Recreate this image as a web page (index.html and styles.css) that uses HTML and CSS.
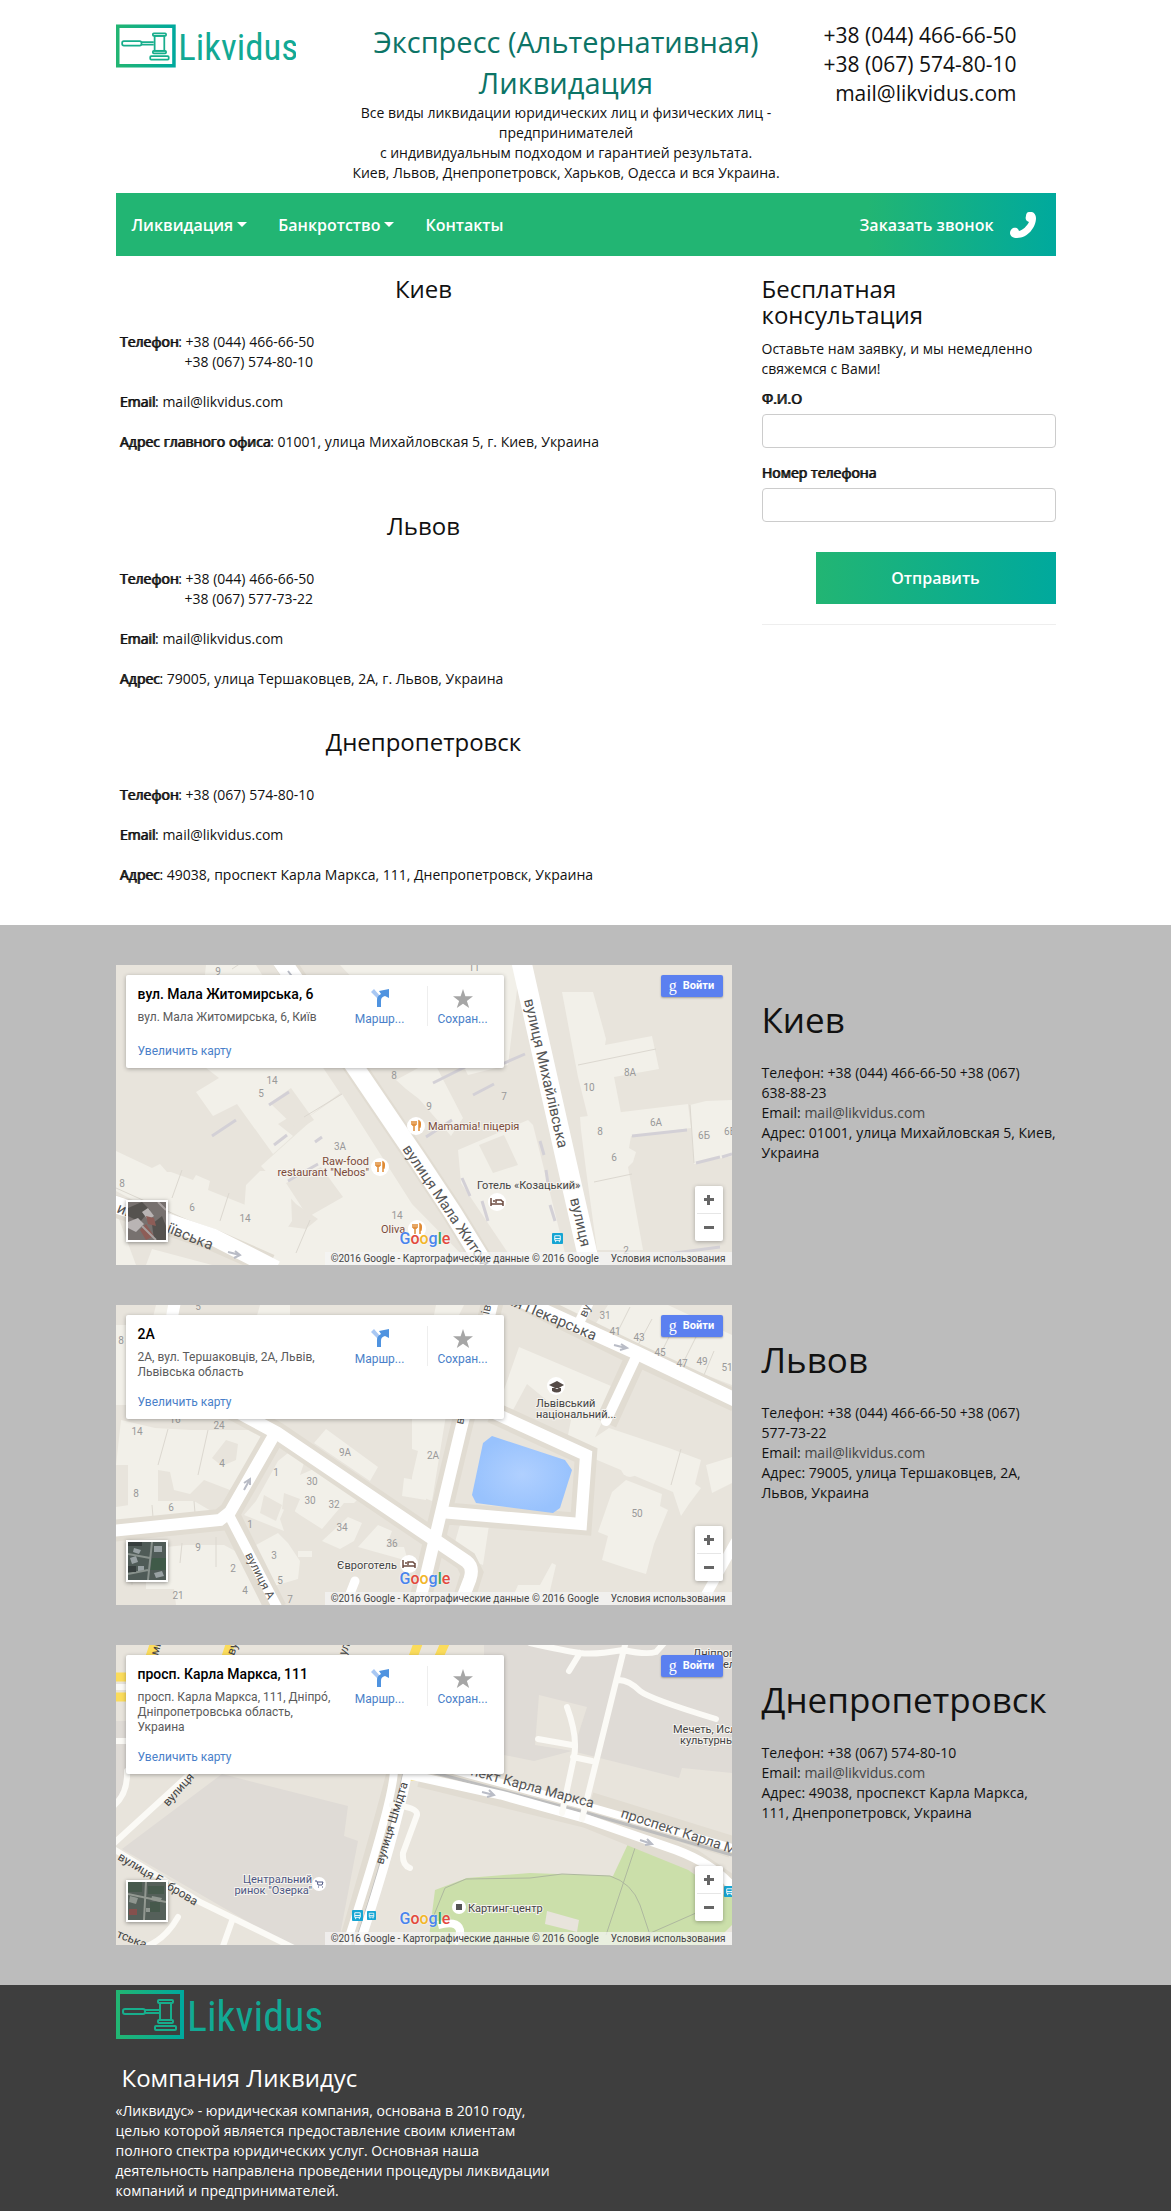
FILE: index.html
```html
<!DOCTYPE html>
<html lang="ru">
<head>
<meta charset="utf-8">
<meta name="viewport" content="width=device-width, initial-scale=1">
<title>Likvidus - Контакты</title>
<link rel="stylesheet" href="styles.css">
</head>
<body>
<svg class="sprite" aria-hidden="true">
  <defs>
    <linearGradient id="brand" x1="0" y1="0" x2="1" y2="0"><stop offset="0" stop-color="#22b573"/><stop offset="1" stop-color="#00a99d"/></linearGradient>
    <radialGradient id="water"><stop offset="0" stop-color="#b0d0ff"/><stop offset="1" stop-color="#98c2fd"/></radialGradient>
  </defs>
  <symbol id="logo" viewBox="0 0 205 49">
    <rect x="2" y="2" width="64" height="45" fill="none" stroke="url(#brand)" stroke-width="4"/>
    <g fill="none" stroke="#17ae8c" stroke-width="2">
      <rect x="7" y="19" width="22" height="5" rx="2"/>
      <path d="M29 20h14M29 23h14"/>
      <rect x="44" y="13" width="11" height="17"/>
      <rect x="42" y="10" width="15" height="3" rx="1"/>
      <rect x="42" y="30" width="15" height="3" rx="1"/>
      <rect x="39" y="36" width="21" height="4" rx="1"/>
    </g>
    <text x="71" y="41" class="logo-text">Likvidus</text>
  </symbol>
  <symbol id="route" viewBox="0 0 18 18">
    <path d="M0 3l3-3 6 7v5z" fill="#a9c8f3"/>
    <path d="M6 18v-7c0-3 1-4 4-6L8 2l10-2v9l-4-2c-3 1-4 2-4 5v6z" fill="#4f93e0"/>
  </symbol>
  <symbol id="star" viewBox="0 0 20 20"><path d="M10 0l2.4 7.300H20l-6.100 4.600L16.200 19 10 14.700 3.800 19l2.300-7.100L0 7.300h7.600z" fill="#a6a6a6"/></symbol>
  <symbol id="fork" viewBox="0 0 18 18">
    <circle cx="9" cy="9" r="9" fill="#fff"/>
    <path d="M5 4v4M7 4v4M9 4v4M5 8h4M7 8v6M12 14V4q2 1 1 6h-1" stroke="#e08a33" stroke-width="1.500" fill="none"/>
  </symbol>
  <symbol id="bed" viewBox="0 0 18 18">
    <circle cx="9" cy="9" r="9" fill="#fff"/>
    <path d="M3 5v8M15 8v5M3 11h12M8 10V7h5l2 2v2M5 8h2" stroke="#6d4c41" stroke-width="1.500" fill="none"/>
  </symbol>
  <symbol id="bus" viewBox="0 0 12 12">
    <rect width="12" height="12" rx="1" fill="#16a5d3"/>
    <path d="M3 3h6v5H3zM3 6h6M4 8v2M8 8v2" stroke="#fff" fill="none"/>
  </symbol>
</svg>

<div class="container">
  <header class="header">
    <a class="header-logo" href="#"><svg class="logo" role="img" aria-label="Likvidus"><use href="#logo"/></svg></a>
    <div class="slogan">
      <h1>Экспресс (Альтернативная) Ликвидация</h1>
      <p>Все виды ликвидации юридических лиц и физических лиц - предпринимателей<br>с индивидуальным подходом и гарантией результата.<br>Киев, Львов, Днепропетровск, Харьков, Одесса и вся Украина.</p>
    </div>
    <address class="header-contacts">+38 (044) 466-66-50<br>+38 (067) 574-80-10<br>mail@likvidus.com</address>
  </header>

  <nav class="nav">
    <button class="nav-item" type="button">Ликвидация<span class="caret"></span></button>
    <button class="nav-item" type="button">Банкротство<span class="caret"></span></button>
    <a class="nav-item" href="#">Контакты</a>
    <button class="nav-item nav-call" type="button">Заказать звонок
      <svg class="phone" viewBox="0 0 26 26" aria-hidden="true"><path d="M19 0c4-1 7 2 7 6 0 9-8 20-19 20-4 0-7-2-7-5 0-2 1-4 3-5 3-1 5 0 6 3 4-1 8-5 10-9-3-1-4-3-3-6 0-2 1-4 3-4z" fill="#fff"/></svg>
    </button>
  </nav>

  <div class="columns">
    <main>
      <section class="office office-main">
        <h2>Киев</h2>
        <p><b>Телефон</b>: +38 (044) 466-66-50<br><span class="second-phone">+38 (067) 574-80-10</span></p>
        <p><b>Email</b>: mail@likvidus.com</p>
        <p><b>Адрес главного офиса</b>: 01001, улица Михайловская 5, г. Киев, Украина</p>
      </section>
      <section class="office">
        <h2>Львов</h2>
        <p><b>Телефон</b>: +38 (044) 466-66-50<br><span class="second-phone">+38 (067) 577-73-22</span></p>
        <p><b>Email</b>: mail@likvidus.com</p>
        <p><b>Адрес</b>: 79005, улица Тершаковцев, 2А, г. Львов, Украина</p>
      </section>
      <section class="office">
        <h2>Днепропетровск</h2>
        <p><b>Телефон</b>: +38 (067) 574-80-10</p>
        <p><b>Email</b>: mail@likvidus.com</p>
        <p><b>Адрес</b>: 49038, проспект Карла Маркса, 111, Днепропетровск, Украина</p>
      </section>
    </main>
    <aside>
      <form class="consult">
        <h2>Бесплатная консультация</h2>
        <p>Оставьте нам заявку, и мы немедленно свяжемся с Вами!</p>
        <label for="name">Ф.И.О</label>
        <input id="name" type="text">
        <label for="phone">Номер телефона</label>
        <input id="phone" type="tel">
        <button type="button">Отправить</button>
      </form>
    </aside>
  </div>
</div>

<div class="maps">
  <div class="container">
    <section class="columns map-row">
      <div class="map">
        <svg class="map-art" viewBox="0 0 616 300" preserveAspectRatio="xMidYMid slice" aria-hidden="true">
          <g class="building">
            <path d="M90 0h50l25 40 59 88-36 27-8-7-18 11 15 12-20 18-36-50-24 12-17-24 23-14L80 95zM224 0h180l-12 100-40 10-30-60-60-10z"/>
            <path d="M188 155l38-26 70 110 60 61H180l-10-20 32-26-22-15-35-38 50-45zM130 220l14-14 30 0 2 50-20 30-30-12z"/>
            <path d="M0 186l36 17 8-4 7 8 4 0 22 8 3-5 14 6-2 9 45 18 8 15 45 6 61 28-7 14H150L0 226z"/>
            <path d="M280 115l37-20 30 58-12 18-32-37-13-10z"/>
            <path d="M342 185l70-30 5 5 35 140h-52l-55-82z"/>
            <path d="M446 27h31l10 36 3 11-1 6 47-9 7 33-45 8 7 36-33 4-10-40z"/>
            <path d="M464 152l42-5 66-8 3 24-60 8-2 12 7 4-3 10-5 5 15 83h-46l-11-80-5-40zM574 140l16-4 26-1v56l-38 8z"/>
            <path d="M0 246v54h20zM36 284l60 16H30z"/>
          </g>
          <g class="yard"><path d="M154 138l21-15 23 32-16 10zM363 180l25-10 14 30-25 8zM170 218l35-16 22 30-35 20z"/></g>
          <g class="wall"><path d="M96 171l24-16M153 140l20-13M158 180l13-10M172 216l30-17M199 177l7-5M317 118l36-18M357 130l21-11M384 100l25-11M310 172l26-17M516 171l55-6M580 198l24-6M606 192l10-3M424 176l4 14M430 205l2 14M434 240l5 16M372 290l12 8M346 213l8 18M366 236l6 20M544 290l60-8"/></g>
          <path class="edge" d="M188 152l38-23M0 223L138 285M56 233l10-28M104 256l9-28M180 288l14-33M462 100l78-16M478 217l38-8M574 140l4 58M116 4l12-8"/>
          <g class="margin"><path d="M167-5L241 105L302 195L337 248L372 305"/><path d="M-5 240L97 275L154 300"/></g>
          <g class="road"><path stroke-width="18" d="M165-5L241 105L302 195L337 248L372 305"/><path stroke-width="20" d="M405-5L450 195L475 305"/><path stroke-width="17" d="M-5 238L97 272L160 304"/></g>
          <path class="arrow" d="M172 6l6 8M172 14l7 0M112 287l12 3M119 286l5 4-6 3"/>
          <g class="num"><text x="102" y="10">9</text><text x="156" y="119">14</text><text x="145" y="132">5</text><text x="224" y="185">3А</text><text x="76" y="246">6</text><text x="129" y="257">14</text><text x="281" y="254">14</text><text x="6" y="222">8</text><text x="278" y="114">8</text><text x="388" y="135">7</text><text x="313" y="145">9</text><text x="473" y="126">10</text><text x="514" y="111">8А</text><text x="540" y="161">6А</text><text x="588" y="174">6Б</text><text x="614" y="170">6Б</text><text x="484" y="170">8</text><text x="498" y="196">6</text><text x="510" y="289">2</text><text x="358" y="6">11</text></g>
          <g class="street"><text transform="translate(408 35) rotate(77)">вулиця Михайлівська</text><text transform="translate(454 234) rotate(77)">вулиця</text><text transform="translate(286 184) rotate(56)">вулиця Мала Житом</text><text transform="translate(0 247) rotate(22)">иц</text><text transform="translate(50 267) rotate(22)">іївська</text></g>
          <g class="poi food"><text x="312" y="165">Mamamia! піцерія</text><text x="253" y="200" text-anchor="end">Raw-food</text><text x="253" y="211" text-anchor="end">restaurant "Nebos"</text><text x="265" y="268">Oliva</text></g>
          <text class="poi" x="361" y="224">Готель «Козацький»</text>
          <use href="#fork" x="291" y="152" width="18" height="18"/><use href="#fork" x="255" y="193" width="18" height="18"/><use href="#fork" x="292" y="255" width="18" height="18"/><use href="#bed" x="372" y="228" width="18" height="18"/><use href="#bus" x="436" y="268" width="11" height="11"/>
        </svg>
        <div class="card">
          <div class="card-text"><h3>вул. Мала Житомирська, 6</h3><p>вул. Мала Житомирська, 6, Київ</p><a href="#">Увеличить карту</a></div>
          <a class="card-action" href="#"><svg class="icon-route"><use href="#route"/></svg>Маршр...</a>
          <a class="card-action card-save" href="#"><svg class="icon-star"><use href="#star"/></svg>Сохран...</a>
        </div>
        <button class="signin" type="button"><span class="g">g</span>Войти</button>
        <svg class="thumb" viewBox="0 0 38 38" aria-label="Спутник"><rect width="38" height="38" fill="#77716f"/><path d="M0 6L14 0l8 8-10 12L0 14zM24 22l10-8 4 10v14H26z" fill="#55524f"/><path d="M0 20l10-4 6 6-8 8-8-4zM14 10l6-4 6 8-6 4z" fill="#b9b4b4"/><path d="M18 14l8 2 2 8-8-2zM12 28l6-6 8 12-8 4z" fill="#8d5d57"/><path d="M14 24l14 14M30 0l8 8" stroke="#a8a1a0" stroke-width="2"/></svg>
        <span class="google"><i class="b">G</i><i class="r">o</i><i class="y">o</i><i class="b">g</i><i class="gr">l</i><i class="r">e</i></span>
        <div class="zoom"><button type="button" aria-label="Приблизить"></button><button type="button" aria-label="Отдалить"></button></div>
        <div class="credits"><span>©2016 Google - Картографические данные © 2016 Google</span><a href="#">Условия использования</a></div>
      </div>
      <div class="branch">
        <h2>Киев</h2>
        <p>Телефон: +38 (044) 466-66-50 +38 (067) <span class="number">638-88-23</span><br>Email: <a href="#">mail@likvidus.com</a><br>Адрес: 01001, улица Михайловская 5, Киев, Украина</p>
      </div>
    </section>

    <section class="columns map-row">
      <div class="map">
        <svg class="map-art" viewBox="0 0 616 300" preserveAspectRatio="xMidYMid slice" aria-hidden="true">
          <g class="building">
            <path d="M0 20h20v80H0zM5 115l34 8 36 2 65 0 10 5-36 55-26-10-14 14-16-4-4-18-12-2v48H12V160H0zM40 196h38l24 14-6 6-96 8v-22z"/>
            <path d="M70 240h38l26 14 18 46H60l-2-16H30v-40zM128 210l12-14 22-40 10-8 16 10-4 12 18-8 44 28-8 8-10 0-22 26-22-14-14-10-6 14 4 12zM140 240l22-12 10 10 12 18-2 18-34 10zM262 220l14 6-6 16 18 0 4 14-50-14z"/>
            <path d="M210 124l52 38-8 14-56-38zM288 173l22 4v18l-24-4zM296 110h34l-14 86-20-8v-16l6-26-6-2zM206 236l26-24 14 6-8 18-14 8zM40 0h18l-10 40H30zM144 0h30v14h-34zM320 0h28l-6 12-24-2zM182 246h14v6h-14z"/>
            <path d="M403 42l92 39-8 34-14 30-22-10 4-20-44-36-14 26-14-6zM475 135l18-12 60 20 32 12-6 24 6 4-12 16-8 12-8-24-90-38zM510 175l36 14-2 12 8 4-14 34-8 30-20-6-24-8 6-24-10-4 14-40zM345 216l28 4-6 40-16-6-14-10z"/>
            <path d="M440 0h32l-6 18-30-6zM480 18l12-18h60l64 30v50l-90-34zM436 258l-12 22h-22l-6 14h36l8-34z"/><circle cx="514" cy="163" r="9"/>
            <path d="M590 160l26-8v26l-20 10z"/>
          </g>
          <path class="yard" d="M110 135l12 4-2 16-14 6-10-8zM148 190l18 10-6 16-16-8zM168 188l16 6-6 14-12-4z"/>
          <path class="edge" d="M92 125l-10 45M36 200l2 24M78 196l2 24M16 240v40M66 238l-2 20M100 232v30M500 30l14-28M522 40l14-26M544 50l14-28M566 60l14-28M588 70l10-24M555 180l10-36M42 160l10-36"/>
          <g class="margin"><path d="M-5 226L104 215L114 207L157 132M111 101L161 128L304 225L350 256L356 268L346 300M114 212L160 304M377-5L344 128L302 304M376 107L470 150L465 219L324 208M390-14L521 50L620 96M521 50L490 118"/></g>
          <g class="road"><path stroke-width="12" d="M-5 226L104 215L114 207L157 132"/><path stroke-width="13" d="M111 101L161 128L304 225L350 256Q358 262 354 274L344 300"/><path stroke-width="10" d="M114 212L162 304"/><path stroke-width="12" d="M377-5L344 128L302 304"/><path stroke-width="12" d="M376 107L470 150L465 219L324 207"/><path stroke-width="14" d="M380-16L521 48L622 96"/><path stroke-width="10" stroke-linecap="round" d="M521 50L490 116M474-5L462 20"/><path stroke-width="10" d="M620 236L590 290"/><path stroke-width="9" stroke-linecap="round" d="M239 276L228 304"/><path stroke-width="12" d="M59-4L56 12"/></g>
          <path d="M376 131L449 155L456 165L444 203L437 208L360 198L356 190L367 138Z" fill="url(#water)"/>
          <path class="arrow" d="M128 185l6-11M128 178l6-4v6M498 40l12 3M505 39l6 4-7 2"/>
          <g class="num"><text x="82" y="5">5</text><text x="5" y="39">8</text><text x="21" y="130">14</text><text x="59" y="118">16</text><text x="103" y="124">24</text><text x="106" y="162">4</text><text x="20" y="192">8</text><text x="55" y="206">6</text><text x="160" y="171">1</text><text x="196" y="180">30</text><text x="194" y="199">30</text><text x="218" y="203">32</text><text x="229" y="151">9А</text><text x="226" y="226">34</text><text x="276" y="242">36</text><text x="134" y="223">1</text><text x="82" y="246">9</text><text x="158" y="254">3</text><text x="117" y="267">2</text><text x="164" y="279">5</text><text x="129" y="289">4</text><text x="62" y="294">21</text><text x="174" y="298">7</text><text x="317" y="154">2А</text><text x="521" y="212">50</text><text x="489" y="14">31</text><text x="499" y="30">41</text><text x="523" y="36">43</text><text x="544" y="51">45</text><text x="566" y="62">47</text><text x="586" y="60">49</text><text x="611" y="66">51</text></g>
          <g class="street"><text transform="translate(394 0) rotate(23)">ія Пекарська</text><text class="street-side" transform="translate(129 250) rotate(63)">вулиця А</text><text class="street-side" transform="translate(347 120) rotate(-77)">в</text><text class="street-side" transform="translate(373 10) rotate(-77)">ів</text><text class="street-side" transform="translate(470 13) rotate(-65)">ву</text></g>
          <g class="poi"><text x="420" y="102">Львівський</text><text x="420" y="113">національний...</text><text x="221" y="264">Євроготель</text></g>
          <circle cx="440" cy="81" r="9" fill="#fff"/><path d="M433 80l8-4 7 4-7 4zM436 83v3q5 3 9 0v-3" fill="#554b47"/><use href="#bed" x="284" y="250" width="18" height="18"/>
        </svg>
        <div class="card">
          <div class="card-text"><h3>2А</h3><p>2А, вул. Тершаковців, 2А, Львів, Львівська область</p><a href="#">Увеличить карту</a></div>
          <a class="card-action" href="#"><svg class="icon-route"><use href="#route"/></svg>Маршр...</a>
          <a class="card-action card-save" href="#"><svg class="icon-star"><use href="#star"/></svg>Сохран...</a>
        </div>
        <button class="signin" type="button"><span class="g">g</span>Войти</button>
        <svg class="thumb" viewBox="0 0 38 38" aria-label="Спутник"><rect width="38" height="38" fill="#4f5b57"/><path d="M24 16h14v12H22z" fill="#3f5a48"/><path d="M26 4h8v6h-8zM2 16l6-2 2 6-6 2zM10 24h6v5h-6zM6 6l7 2-2 4-6-2zM26 31l8-2 2 5-8 2z" fill="#98a1a3"/><path d="M24 0l-4 38M0 12l22 4M0 32l20-4" stroke="#88918c" stroke-width="2"/><path d="M0 0h14v4H0zM0 24h8v6H0z" fill="#373f3e"/></svg>
        <span class="google"><i class="b">G</i><i class="r">o</i><i class="y">o</i><i class="b">g</i><i class="gr">l</i><i class="r">e</i></span>
        <div class="zoom"><button type="button" aria-label="Приблизить"></button><button type="button" aria-label="Отдалить"></button></div>
        <div class="credits"><span>©2016 Google - Картографические данные © 2016 Google</span><a href="#">Условия использования</a></div>
      </div>
      <div class="branch">
        <h2>Львов</h2>
        <p>Телефон: +38 (044) 466-66-50 +38 (067) <span class="number">577-73-22</span><br>Email: <a href="#">mail@likvidus.com</a><br>Адрес: 79005, улица Тершаковцев, 2А, Львов, Украина</p>
      </div>
    </section>

    <section class="columns map-row">
      <div class="map">
        <svg class="map-art" viewBox="0 0 616 300" preserveAspectRatio="xMidYMid slice" aria-hidden="true">
          <path class="block" d="M0 76h14v52l-14 30zM106 129l126 32-4 30 14 5-20 104h-50L6 204zM388 0h228v128l-50-5-3 10-107-27-38 10-50-10V0z"/>
          <path d="M423 50l48 12-14 44-38-6z" fill="#e8e4dc"/>
          <path d="M512 199L582 225L616 250V280L596 300H312L319 245L351 233L414 228L497 231Z" fill="#cbdfaa"/>
          <path d="M318 270L329 243L350 234L414 233L446 229L494 231Q516 238 524 260L536 296M520 200L490 290M530 290L580 268" fill="none" stroke="#aeb89f"/>
          <path d="M431 266l32 9-2 12-32-8z" fill="#e8e4dc"/>
          <g class="yellow"><path d="M0 32h12M0 52h12M38 0l-4 12M114 0l-4 12M303-4l-6 16M330-4l-8 18M288 131h16"/></g>
          <g class="margin"><path d="M282 126Q274 160 232 304M304 131L471 172L577 215L616 242M474 158L616 202"/></g>
          <path d="M288 128Q270 210 238 304M304 124L471 168L616 210" fill="none" stroke="#bdbdbd" stroke-width="3"/>
          <g class="road"><path stroke-width="8" d="M278 126Q276 160 229 304"/><path stroke-width="9" d="M292 126Q280 190 242 304"/><path stroke-width="9" d="M290 129L385 150L471 174L560 205Q600 220 620 246"/><path stroke-width="8" d="M300 115L474 162L620 204"/></g>
          <g class="road minor" stroke-width="6"><path d="M510-4L466 174M414-2Q450 6 464 8T507 5Q530 10 540 7L549-3M464 8L453 26M501 35Q512 34 524 46Q534 54 600 74M451 62Q462 92 458 112L446 168M422 94L456 100M457 112L476 116M-4 203L84 257L180 304M-4 200L77 126M117 273L106 304M276 160Q302 162 301 170L287 208Q286 220 294 223M11 126Q12 150-4 162M-2 96h14M62 272Q46 300 20 304M0 42h10"/></g>
          <path d="M322 280q24-6 22 10l-6 8" fill="none" stroke="#fff" stroke-width="8"/>
          <path class="arrow" d="M366 147l12 3M373 145l5 5-7 2M524 195l12 4M531 194l5 5-7 1"/>
          <g class="street street-dark"><text transform="translate(354 130) rotate(15)">пект Карла Маркса</text><text transform="translate(504 172) rotate(18)">проспект Карла Маркса</text></g>
          <g class="street street-small"><text transform="translate(52 162) rotate(-48)">вулиця</text><text transform="translate(1 214) rotate(31)">вулиця Боброва</text><text transform="translate(267 220) rotate(-73)">вулиця Шмідта</text><text transform="translate(0 292) rotate(22)">тська</text><text transform="translate(230 11) rotate(-70)">ул.</text><text transform="translate(42 11) rotate(-75)">ми</text><text transform="translate(118 11) rotate(-70)">ву</text></g>
          <g class="poi market"><text x="196" y="238" text-anchor="end">Центральний</text><text x="196" y="249" text-anchor="end">ринок "Озерка"</text></g>
          <g class="poi"><text x="352" y="267">Картинг-центр</text><text x="557" y="88">Мечеть, Исламский</text><text x="564" y="99">культурный</text><text x="577" y="12">Дніпропетр</text><text x="607" y="23">ел</text></g>
          <circle cx="203" cy="239" r="7" fill="#fff"/><path d="M199 236h2l1 4h4l1-3h-5M202 242h1M206 242h1" stroke="#4d5784" fill="none"/>
          <circle cx="343" cy="262" r="7" fill="#fff"/><path d="M340 259h6v6h-6z" fill="#555"/>
          <use href="#bus" x="236" y="265" width="11" height="11"/><use href="#bus" x="251" y="266" width="9" height="9"/><use href="#bus" x="608" y="241" width="11" height="11"/>
        </svg>
        <div class="card">
          <div class="card-text"><h3>просп. Карла Маркса, 111</h3><p>просп. Карла Маркса, 111, Дніпро́, Дніпропетровська область, Украина</p><a href="#">Увеличить карту</a></div>
          <a class="card-action" href="#"><svg class="icon-route"><use href="#route"/></svg>Маршр...</a>
          <a class="card-action card-save" href="#"><svg class="icon-star"><use href="#star"/></svg>Сохран...</a>
        </div>
        <button class="signin" type="button"><span class="g">g</span>Войти</button>
        <svg class="thumb" viewBox="0 0 38 38" aria-label="Спутник"><rect width="38" height="38" fill="#55605a"/><path d="M0 0h14v10H0zM20 4h16v8H20zM22 20h10v10H22z" fill="#46594c"/><path d="M2 14l8 2-2 6-7-2zM24 14l10 2-2 4-9-2zM18 26h4v4h-4z" fill="#8f9690"/><path d="M18 0l-2 38M0 12l38 8" stroke="#929891" stroke-width="2"/><path d="M1 27h8v6H1z" fill="#85504d"/></svg>
        <span class="google"><i class="b">G</i><i class="r">o</i><i class="y">o</i><i class="b">g</i><i class="gr">l</i><i class="r">e</i></span>
        <div class="zoom"><button type="button" aria-label="Приблизить"></button><button type="button" aria-label="Отдалить"></button></div>
        <div class="credits"><span>©2016 Google - Картографические данные © 2016 Google</span><a href="#">Условия использования</a></div>
      </div>
      <div class="branch">
        <h2>Днепропетровск</h2>
        <p>Телефон: +38 (067) 574-80-10<br>Email: <a href="#">mail@likvidus.com</a><br>Адрес: 49038, проспекст Карла Маркса, 111, Днепропетровск, Украина</p>
      </div>
    </section>
  </div>
</div>

<footer class="footer">
  <div class="container">
    <div class="about">
      <svg class="logo logo-footer" role="img" aria-label="Likvidus"><use href="#logo"/></svg>
      <h2>Компания Ликвидус</h2>
      <p>«Ликвидус» - юридическая компания, основана в 2010 году, целью которой является предоставление своим клиентам полного спектра юридических услуг. Основная наша деятельность направлена проведении процедуры ликвидации компаний и предпринимателей.</p>
    </div>
  </div>
</footer>
</body>
</html>
```

FILE: styles.css
```css
* { box-sizing: border-box; }

body {
  margin: 0;
  background: #fff;
  color: #111;
  font: 14px/20px "Open Sans", "Noto Sans", sans-serif;
}

h1, h2, h3, p { margin: 0; font-weight: 400; }
button, input { font: inherit; }
button { border: 0; background: none; padding: 0; cursor: pointer; }
a { text-decoration: none; }
.sprite { display: block; width: 0; height: 0; }

.container { max-width: 970px; margin: 0 auto; padding: 0 15px; }

/* Header */
.header {
  display: grid;
  grid-template-columns: 223fr 455fr 262fr;
  padding: 21px 0 10px;
}
.header-logo { padding-top: 3px; }
.logo { display: block; width: 180px; height: 44px; }
.logo-text {
  font: 42px "Liberation Sans Narrow", "Roboto Condensed", "DejaVu Sans Condensed", sans-serif;
  fill: #12a994;
}
.slogan { text-align: center; }
.slogan h1 { color: #0c7466; font-size: 29px; line-height: 41px; }
.header-contacts {
  padding-right: 39px;
  font-size: 21px;
  font-style: normal;
  line-height: 29px;
  text-align: right;
}

/* Navigation */
.nav {
  display: flex;
  align-items: center;
  gap: 31px;
  min-height: 63px;
  padding: 0 16px;
  background: linear-gradient(to right, #22b573 80%, #00a99d);
}
.nav-item {
  display: flex;
  align-items: center;
  color: #fff;
  font-size: 16px;
  font-weight: 600;
}
.caret {
  margin-left: 4px;
  border: 5px solid transparent;
  border-top-color: #fff;
  border-bottom: 0;
}
.nav-call { gap: 16px; margin-left: auto; padding-right: 4px; }
.phone { width: 26px; height: 26px; }

/* Offices and request form */
.columns { display: grid; grid-template-columns: 616fr 294fr; gap: 30px; }
main { padding-top: 20px; }
.office { padding: 0 4px 40px; }
.office-main { padding-bottom: 61px; }
.office h2 { margin-bottom: 30px; font-size: 24px; line-height: 26px; text-align: center; }
.office p + p { margin-top: 20px; }
.office b { font-weight: 400; text-shadow: 1px 0 currentColor; }
.second-phone { padding-left: 65px; }

.consult { margin-top: 20px; border-bottom: 1px solid #eee; padding-bottom: 20px; }
.consult h2 { margin-bottom: 11px; font-size: 24px; line-height: 26px; }
.consult p { margin-bottom: 10px; }
.consult label { display: block; margin-bottom: 5px; text-shadow: 1px 0 currentColor; }
.consult input {
  display: block;
  width: 100%;
  height: 34px;
  margin-bottom: 15px;
  padding: 6px 12px;
  border: 1px solid #ccc;
  border-radius: 4px;
}
.consult button {
  display: block;
  width: 240px;
  height: 52px;
  margin: 30px 0 0 auto;
  background: linear-gradient(to right, #22b573, #00a99d);
  color: #fff;
  font-size: 16px;
  font-weight: 600;
}

/* Maps */
.maps { padding: 40px 0; background: #bcbcbc; }
.map-row + .map-row { margin-top: 40px; }
.branch { margin-right: -2px; padding-top: 35px; }
.branch h2 { margin-bottom: 23px; font-size: 35px; line-height: 40px; }
.branch a { color: #444; }
.number { white-space: nowrap; }

.map {
  position: relative;
  height: 300px;
  overflow: hidden;
  background: #e8e4dc;
  font-family: Roboto, "Noto Sans", sans-serif;
}
.map-art { display: block; width: 100%; height: 100%; }
.building { fill: #f2f0e9; }
.yard { fill: #e8e4dc; }
.block { fill: #dfdbd6; }
.wall { fill: none; stroke: #d3d0d6; stroke-width: 3; }
.edge { fill: none; stroke: #dcd8d0; }
.margin { fill: none; stroke: #e1dcd2; stroke-width: 22; }
.road { fill: none; stroke: #fff; }
.minor { stroke: #fbfaf6; stroke-linecap: round; }
.yellow { fill: none; stroke: #fbdc5b; stroke-width: 9; }
.arrow { fill: none; stroke: #b9bcc6; stroke-width: 2; }
.num { fill: #999; font-size: 10px; text-anchor: middle; }
.street { fill: #555; font-size: 15px; }
.street-dark { font-size: 14px; }
.street-side { font-size: 12px; }
.street-small { fill: #444; font-size: 12px; }
.poi { fill: #444; font-size: 11px; paint-order: stroke; stroke: #f5f3ee; stroke-width: 2; }
.food { fill: #7b4b3a; }
.market { fill: #4d5784; }

.card {
  position: absolute;
  top: 10px;
  left: 10px;
  display: flex;
  width: 378px;
  padding: 11px 0 9px 12px;
  border-radius: 2px;
  background: #fff;
  box-shadow: 0 1px 4px rgba(0, 0, 0, .3);
  color: #5b5b5b;
  font-size: 12px;
  line-height: 15px;
}
.card-text { width: 195px; }
.card h3 { margin-bottom: 7px; color: #000; font-size: 14px; font-weight: 500; line-height: 17px; }
.card p { min-height: 19px; margin-bottom: 15px; }
.card a { color: #4a7fc9; }
.card-action {
  display: flex;
  flex-direction: column;
  align-items: center;
  gap: 5px;
  width: 94px;
  height: 40px;
  padding-top: 3px;
}
.card-save { width: 71px; gap: 3px; border-left: 1px solid #eee; }
.icon-route { width: 18px; height: 18px; flex: none; }
.icon-star { width: 20px; height: 20px; flex: none; }

.signin {
  position: absolute;
  top: 10px;
  right: 9px;
  display: flex;
  align-items: center;
  justify-content: center;
  gap: 6px;
  width: 62px;
  height: 22px;
  border-radius: 2px;
  background: #5b80f0;
  box-shadow: 0 1px 2px rgba(0, 0, 0, .3);
  color: #fff;
  font-size: 11px;
  font-weight: 700;
  line-height: 20px;
}
.g { font: 16px/16px "Liberation Serif", serif; }

.thumb {
  position: absolute;
  left: 10px;
  bottom: 23px;
  width: 42px;
  height: 42px;
  border: 2px solid #fff;
  box-shadow: 0 1px 4px rgba(0, 0, 0, .4);
}

.google {
  position: absolute;
  left: 284px;
  bottom: 16px;
  font: 500 16px/20px Roboto, sans-serif;
  text-shadow: 0 0 2px #fff;
}
.google i { font-style: normal; }
.b { color: #4a85ec; }
.r { color: #e2493d; }
.y { color: #f2b62b; }
.gr { color: #3aa657; }

.zoom {
  position: absolute;
  right: 9px;
  bottom: 24px;
  width: 28px;
  padding: 0 2px;
  border-radius: 2px;
  background: #fff;
  box-shadow: 0 1px 4px rgba(0, 0, 0, .3);
}
.zoom button {
  display: block;
  width: 100%;
  height: 27px;
  background: linear-gradient(#666, #666) center / 10px 3px no-repeat;
}
.zoom button:first-child {
  height: 28px;
  border-bottom: 1px solid #e6e6e6;
  background:
    linear-gradient(#666, #666) center / 10px 3px no-repeat,
    linear-gradient(#666, #666) center / 3px 10px no-repeat;
}

.credits {
  position: absolute;
  right: 0;
  bottom: 0;
  display: flex;
  gap: 12px;
  padding: 0 6px;
  background: rgba(245, 245, 245, .7);
  color: #444;
  font-size: 10px;
  line-height: 13px;
  white-space: nowrap;
}
.credits a { color: #444; }

/* Footer */
.footer { padding: 5px 0 10px; background: #3e3e3e; color: #fff; }
.about { max-width: 440px; }
.logo-footer { width: 205px; height: 49px; }
.about h2 { margin: 26px 6px 10px; font-size: 24px; line-height: 26px; }
```
